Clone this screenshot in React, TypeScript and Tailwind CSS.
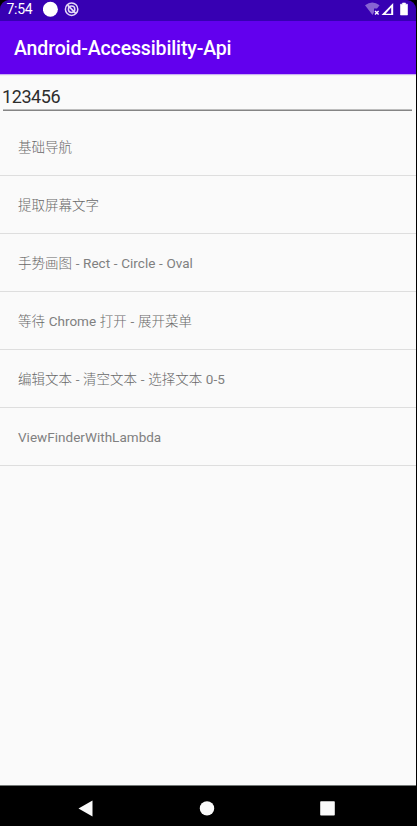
const items: string[] = [
  '基础导航',
  '提取屏幕文字',
  '手势画图 - Rect - Circle - Oval',
  '等待 Chrome 打开 - 展开菜单',
  '编辑文本 - 清空文本 - 选择文本 0-5',
  'ViewFinderWithLambda',
];

// Latin runs are set in the regular weight, Chinese runs in the light one.
function MixedText({ text }: { text: string }) {
  return (
    <span className="whitespace-pre leading-5">
      {text.split(/([ -~]+)/).map((run, i) =>
        i % 2 === 1 ? (
          <span key={i} className="font-normal tracking-[0.02px] text-[#808080] [word-spacing:0.3px]">
            {run}
          </span>
        ) : (
          run
        ),
      )}
    </span>
  );
}

function StatusBar() {
  return (
    <div className="bg-black">
      <div className="flex h-[21px] items-start rounded-t-[9px] bg-[#3700b3] pl-[6.5px] text-white">
        <span className="w-9 text-[14px] leading-[19px] tracking-[-0.3px]">7:54</span>
        <svg className="mt-[1px]" width="38" height="17" viewBox="0 0 38 17">
          <circle cx="7.4" cy="8.3" r="7.5" fill="#fff" />
          <g fill="none" stroke="#e4daf7">
            <circle cx="28.6" cy="8.2" r="6.2" strokeWidth="1.5" />
            <circle cx="28.6" cy="8.2" r="3.2" strokeWidth="1.5" />
            <path d="M24.6 4.2 33 12.6" strokeWidth="1.8" />
          </g>
        </svg>
        <svg className="ml-auto mr-[7px]" width="44" height="18" viewBox="0 0 44 18">
          <path d="M0 5.2Q7.3 0 14.6 5.2L12 8.6H9v3.7L7.5 15Z" fill="#8764d3" />
          <path d="m10 11 3.6 3.6m0-3.6L10 14.6" stroke="#fff" strokeWidth="1.4" />
          <path d="M28.2 3v12H16.5Z" fill="#fff" />
          <path d="M26.2 7.5v6.3h-5.6Z" fill="#3700b3" />
          <path d="M35.5 4.2h2V3h3v1.2h2V15h-7Z" fill="#fff" stroke="#fff" strokeWidth=".6" strokeLinejoin="round" />
        </svg>
      </div>
    </div>
  );
}

function NavigationBar() {
  return (
    <div className="flex h-[41px] border-t border-[#737876] bg-black">
      <svg width="416" height="40" viewBox="0 0 416 40">
        <path d="M78.5 22.5 92.5 14.4v16.2Z" fill="#fafafa" />
        <circle cx="207" cy="22.4" r="7.2" fill="#fafafa" />
        <rect x="320.2" y="15.2" width="14.6" height="14.4" rx=".8" fill="#fafafa" />
      </svg>
    </div>
  );
}

export default function App() {
  return (
    <div className="h-[826px] w-[417px] bg-black font-['Roboto','Noto_Sans_CJK_SC',sans-serif]">
      <div className="flex h-full w-[416px] flex-col overflow-hidden bg-[#fafafa]">
        <StatusBar />
        <header className="flex h-[54px] items-center border-b border-[#c9adf5] bg-[#6200ee] pl-[14px] pt-[3px]">
          <h1 className="text-[19.5px] font-medium tracking-[-0.14px] text-white">Android-Accessibility-Api</h1>
        </header>
        <div className="h-px bg-[#f0f0f0]" />
        <div className="h-[42px] px-[3px] pt-[10px]">
          <div className="h-[25px] w-[409px] border-b border-[#858585]">
            <input
              aria-label="Text"
              defaultValue="123456"
              className="block h-6 w-[409px] -indent-px border-b border-[#bdbdbd] bg-transparent pb-[2px] text-[18px] tracking-[-0.42px] text-[#2d2d2d] outline-none"
            />
          </div>
        </div>
        <ul className="flex-1">
          {items.map((item) => (
            <li
              key={item}
              className="flex h-[58px] items-center border-b border-[#dedede] pl-[18px] text-[13.5px] font-light text-[#686868]"
            >
              <MixedText text={item} />
            </li>
          ))}
        </ul>
        <NavigationBar />
      </div>
    </div>
  );
}
